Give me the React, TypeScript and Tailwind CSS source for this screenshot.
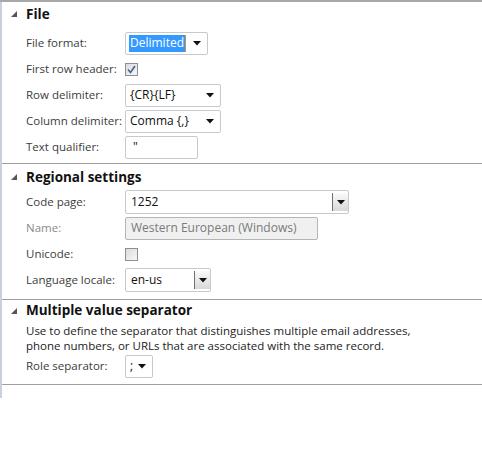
import React from 'react';

const font = { fontFamily: '"Open Sans", "Noto Sans", sans-serif' };

function Expander() {
  return (
    <svg width="6" height="6" viewBox="0 0 6 6" className="shrink-0">
      <polygon points="6,0 6,6 0,6" fill="#555" />
    </svg>
  );
}

function Arrow() {
  return (
    <svg width="8" height="5" viewBox="0 0 8 5">
      <polygon points="0,0 8,0 4,4.5" fill="#111" />
    </svg>
  );
}

function SectionHeader({ title, className = '' }: { title: string; className?: string }) {
  return (
    <div className={`flex items-center pl-[9px] gap-[9px] ${className}`}>
      <Expander />
      <span className="text-[13.5px] font-bold text-[#111]">{title}</span>
    </div>
  );
}

function Row({ label, disabled, children }: { label: string; disabled?: boolean; children: React.ReactNode }) {
  return (
    <div className="flex items-center h-[26px] pl-[24px]">
      <span className={`w-[99px] text-[11.5px] whitespace-nowrap ${disabled ? 'text-[#8a8a8a]' : 'text-[#3c3c3c]'}`}>{label}</span>
      {children}
    </div>
  );
}

function Select({ width, value, selected }: { width: string; value: string; selected?: boolean }) {
  return (
    <div className={`${width} h-[23px] border border-[#c6c9ce] rounded-[2px] bg-white flex items-center pl-[3px] pr-[6px]`}>
      <div className="flex-1 flex items-center">
        {selected ? (
          <span className="flex items-center h-[17px] bg-[#3399ff] text-white text-[12px] px-[1px] border-r border-[#e08a3c]">{value}</span>
        ) : (
          <span className="text-[12px] text-[#111] pl-[1px]">{value}</span>
        )}
      </div>
      <Arrow />
    </div>
  );
}

function ButtonSelect({ width, value }: { width: string; value: string }) {
  return (
    <div className={`${width} h-[24px] border border-[#c6c9ce] rounded-[2px] bg-white flex items-stretch`}>
      <div className="flex-1 flex items-center pl-[5px] text-[12px] text-[#111]">{value}</div>
      <div className="w-[16px] border-l border-[#707070] my-[2px] bg-gradient-to-b from-[#fafafa] to-[#d8d8d8] flex items-center justify-center">
        <Arrow />
      </div>
    </div>
  );
}

function Checkbox({ checked }: { checked?: boolean }) {
  return (
    <div className="w-[13px] h-[13px] border border-[#8e8f8f] bg-gradient-to-br from-[#dcdcdc] to-[#f7f7f7] flex items-center justify-center">
      {checked && (
        <svg width="9" height="9" viewBox="0 0 9 9">
          <path d="M1 4.5 L3.5 7.5 L8 1" fill="none" stroke="#4a5f97" strokeWidth="1.6" />
        </svg>
      )}
    </div>
  );
}

export default function App() {
  return (
    <div className="w-[482px] h-[450px] bg-white overflow-hidden" style={font}>
      <div className="border-t-2 border-[#a8a8a8]">
        <div className="border-l-2 border-[#c9d0da] pb-[13px]">
          {/* File */}
          <div className="border-b border-[#a0a0a0] pb-[3px]">
            <SectionHeader title="File" className="h-[26px] pb-[2px]" />
            <div className="pt-[2px]">
              <Row label="File format:">
                <Select width="w-[83px]" value="Delimited" selected />
              </Row>
              <Row label="First row header:">
                <Checkbox checked />
              </Row>
              <Row label="Row delimiter:">
                <Select width="w-[96px]" value="{CR}{LF}" />
              </Row>
              <Row label="Column delimiter:">
                <Select width="w-[96px]" value="Comma {,}" />
              </Row>
              <Row label="Text qualifier:">
                <div className="w-[73px] h-[23px] border border-[#c6c9ce] rounded-[2px] bg-white flex items-center pl-[7px] text-[12px] text-[#111]">"</div>
              </Row>
            </div>
          </div>

          {/* Regional settings */}
          <div className="border-b border-[#a0a0a0] pb-[6px]">
            <SectionHeader title="Regional settings" className="h-[25px] pt-[1px]" />
            <Row label="Code page:">
              <ButtonSelect width="w-[224px]" value="1252" />
            </Row>
            <Row label="Name:" disabled>
              <div className="w-[193px] h-[23px] border border-[#b5b5b5] rounded-[2px] bg-[#f0f0f0] flex items-center pl-[5px] text-[12px] text-[#7a7a7a]">Western European (Windows)</div>
            </Row>
            <Row label="Unicode:">
              <Checkbox />
            </Row>
            <Row label="Language locale:">
              <ButtonSelect width="w-[86px]" value="en-us" />
            </Row>
          </div>

          {/* Multiple value separator */}
          <div className="border-b border-[#a0a0a0] pb-[5px]">
            <SectionHeader title="Multiple value separator" className="h-[21px]" />
            <p className="pl-[24px] pt-[2px] text-[11.5px] leading-[15px] text-[#222]">
              Use to define the separator that distinguishes multiple email addresses,
              <br />
              phone numbers, or URLs that are associated with the same record.
            </p>
            <Row label="Role separator:">
              <Select width="w-[28px]" value=";" />
            </Row>
          </div>
        </div>
      </div>
    </div>
  );
}
